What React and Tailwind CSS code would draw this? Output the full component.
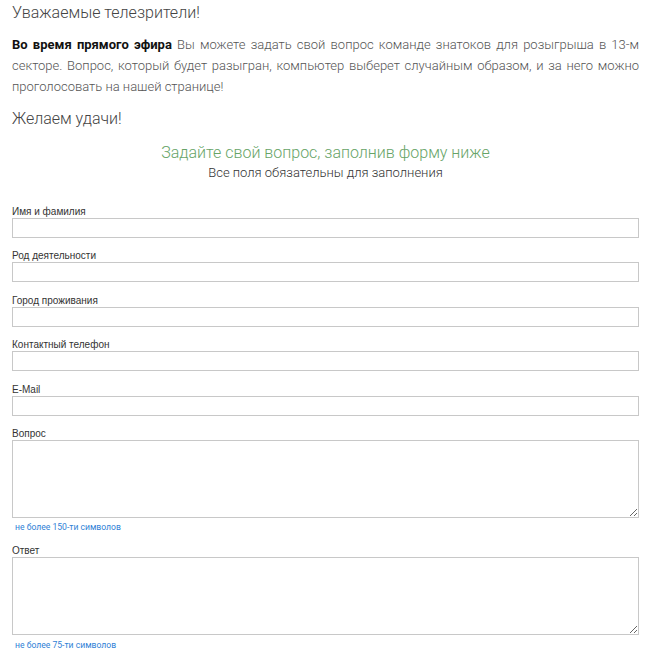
import React from "react";

const labelCls =
  "block text-[10px] leading-[12px] text-[#333] font-['Liberation_Sans',Arial,sans-serif]";
const inputCls =
  "block w-full h-[20px] border border-[#c8c8c8] bg-white outline-none";
const hintCls =
  "block mt-[3.5px] pl-[3px] text-[8.6px] leading-[12px] text-[#2f7fd6] font-['Roboto',sans-serif] font-normal";

function Field({ label }) {
  return (
    <div className="mb-[12.4px]">
      <label className={labelCls}>{label}</label>
      <input type="text" className={inputCls} />
    </div>
  );
}

function Area({ label, hint, last }) {
  return (
    <div className={last ? "" : "mb-[12px]"}>
      <label className={labelCls}>{label}</label>
      <textarea className="block w-full h-[78px] border border-[#c8c8c8] bg-white outline-none" />
      <span className={hintCls}>{hint}</span>
    </div>
  );
}

export default function App() {
  return (
    <div className="w-[651px] h-[657px] overflow-hidden bg-white px-3 pt-[2px] font-['Roboto',sans-serif] font-light text-[#444]">
      <h1 className="text-[16px] leading-[22px] font-light text-[#444]">
        Уважаемые телезрители!
      </h1>
      <p className="mt-[10px] text-[13px] leading-[21px] text-justify text-[#555]">
        <b className="font-bold text-[#111]">Во время прямого эфира</b> Вы
        можете задать свой вопрос команде знатоков для розыгрыша в 13-м
        секторе. Вопрос, который будет разыгран, компьютер выберет случайным
        образом, и за него можно проголосовать на нашей странице!
      </p>
      <h2 className="mt-[11px] text-[16px] leading-[22px] font-light text-[#444]">
        Желаем удачи!
      </h2>
      <div className="mt-[12px] text-center">
        <div className="text-[16px] leading-[22px] font-light text-[#67a467]">
          Задайте свой вопрос, заполнив форму ниже
        </div>
        <div className="text-[13px] leading-[18px] font-light text-[#333]">
          Все поля обязательны для заполнения
        </div>
      </div>
      <form className="mt-[24px]">
        <Field label="Имя и фамилия" />
        <Field label="Род деятельности" />
        <Field label="Город проживания" />
        <Field label="Контактный телефон" />
        <Field label="E-Mail" />
        <Area label="Вопрос" hint="не более 150-ти символов" />
        <Area label="Ответ" hint="не более 75-ти символов" last />
      </form>
    </div>
  );
}
